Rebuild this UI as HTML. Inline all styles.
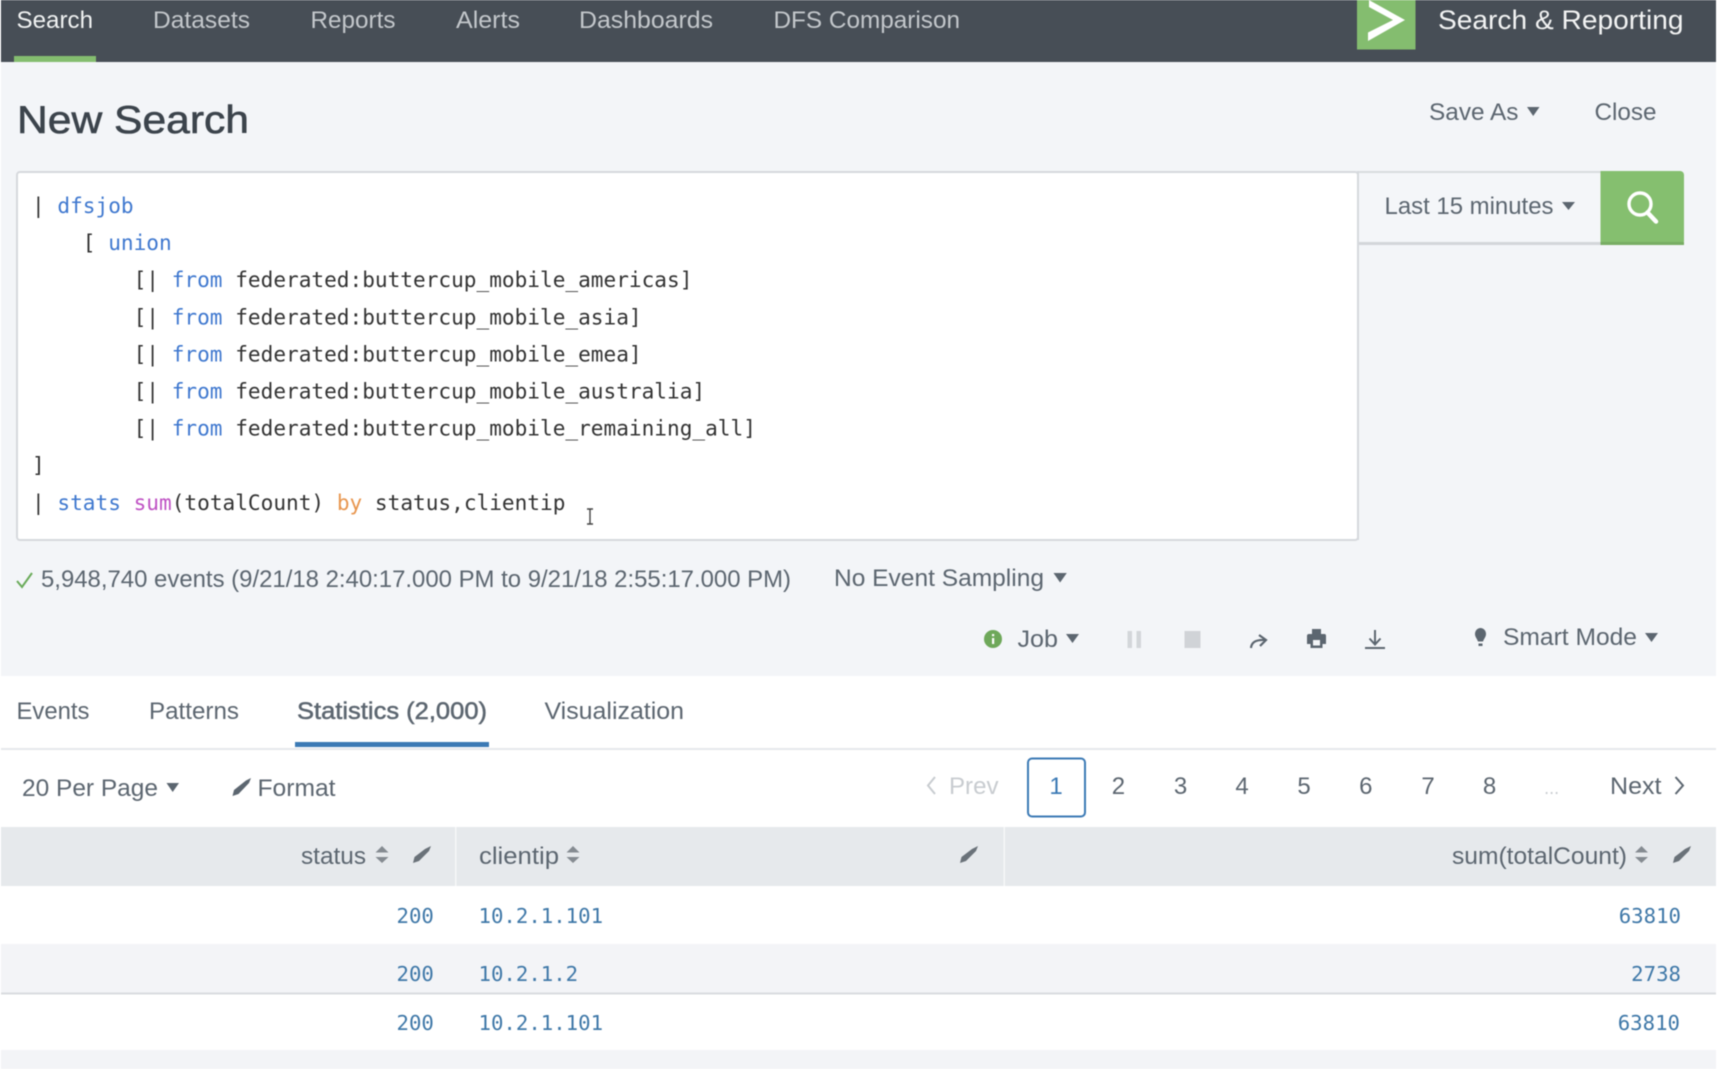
<!DOCTYPE html>
<html><head><meta charset="utf-8"><title>New Search</title>
<style>
html,body{margin:0;padding:0;background:#fff;width:1718px;height:1069px;overflow:hidden}
svg{display:block;position:absolute;left:0;top:0;filter:blur(.45px)}
text{font-family:"Liberation Sans",sans-serif;font-size:24px;fill:#5c6670}
.m text,text.m{font-family:"DejaVu Sans Mono","Liberation Mono",monospace;font-size:21.1px;fill:#333;white-space:pre}
.b{fill:#3f78cf}.p{fill:#bf52c4}.o{fill:#e8964f}
.v text{font-family:"DejaVu Sans Mono","Liberation Mono",monospace;font-size:20.7px;fill:#3f78a8}
</style></head><body>
<svg width="1718" height="1069" viewBox="0 0 1718 1069" xmlns="http://www.w3.org/2000/svg">
<rect x="1" y="0" width="1715" height="1069" fill="#f3f5f8"/>
<!-- nav -->
<rect x="1" y="0" width="1715" height="62" fill="#474e56"/>
<rect x="14" y="56" width="82" height="6" fill="#84bd6f"/>
<g>
<text x="16.5" y="28" textLength="76.5" lengthAdjust="spacingAndGlyphs" style="fill:#f0f2f2">Search</text>
<text x="153" y="28" textLength="97" lengthAdjust="spacingAndGlyphs" style="fill:#c3c7cb">Datasets</text>
<text x="310.5" y="28" textLength="85" lengthAdjust="spacingAndGlyphs" style="fill:#c3c7cb">Reports</text>
<text x="456" y="28" textLength="64" lengthAdjust="spacingAndGlyphs" style="fill:#c3c7cb">Alerts</text>
<text x="579" y="28" textLength="134" lengthAdjust="spacingAndGlyphs" style="fill:#c3c7cb">Dashboards</text>
<text x="773.5" y="28" textLength="186.5" lengthAdjust="spacingAndGlyphs" style="fill:#c3c7cb">DFS Comparison</text>
</g>
<rect x="1357" y="0" width="58.5" height="49.5" fill="#84bd6f"/>
<path d="M1369 0L1405 20L1368 41V32.5L1393 20L1369 7Z" fill="#fff"/>
<text x="1438" y="29" textLength="245.5" lengthAdjust="spacingAndGlyphs" style="font-size:26.5px;fill:#f2f3f3">Search &amp; Reporting</text>
<!-- title -->
<text x="17" y="133" textLength="232" lengthAdjust="spacingAndGlyphs" style="font-size:39px;fill:#3c444c;stroke:#3c444c;stroke-width:.6px">New Search</text>
<text x="1429" y="120" textLength="89.5" lengthAdjust="spacingAndGlyphs">Save As</text>
<path d="M1527 107H1539.5L1533.2 116Z" fill="#5c6670"/>
<text x="1594.5" y="120" textLength="62" lengthAdjust="spacingAndGlyphs">Close</text>
<!-- editor -->
<rect x="17" y="172" width="1341" height="368" rx="3" fill="#fff" stroke="#d6d9dd" stroke-width="2"/>
<g class="m">
<text x="32" y="213">| <tspan class="b">dfsjob</tspan></text>
<text x="32" y="250.1">    [ <tspan class="b">union</tspan></text>
<text x="32" y="287.2">        [| <tspan class="b">from</tspan> federated:buttercup_mobile_americas]</text>
<text x="32" y="324.3">        [| <tspan class="b">from</tspan> federated:buttercup_mobile_asia]</text>
<text x="32" y="361.4">        [| <tspan class="b">from</tspan> federated:buttercup_mobile_emea]</text>
<text x="32" y="398.5">        [| <tspan class="b">from</tspan> federated:buttercup_mobile_australia]</text>
<text x="32" y="435.6">        [| <tspan class="b">from</tspan> federated:buttercup_mobile_remaining_all]</text>
<text x="32" y="472.7">]</text>
<text x="32" y="509.8">| <tspan class="b">stats</tspan> <tspan class="p">sum</tspan>(totalCount) <tspan class="o">by</tspan> status,clientip</text>
</g>
<path d="M587 509H593M590 509V524M587 524H593" stroke="#444" stroke-width="1.4" fill="none"/>
<!-- time range -->
<rect x="1358" y="172" width="243" height="73" fill="#f4f6f9"/>
<rect x="1358" y="171" width="243" height="2" fill="#d9dcdf"/>
<rect x="1358" y="242" width="243" height="3" fill="#d3d6da"/>
<rect x="1357" y="171" width="2" height="369" fill="#d6d9dd"/>
<text x="1384.5" y="214" textLength="169" lengthAdjust="spacingAndGlyphs">Last 15 minutes</text>
<path d="M1562 202H1575L1568.5 210Z" fill="#5c6670"/>
<path d="M1600.5 171H1680a4 4 0 0 1 4 4V241a4 4 0 0 1-4 4H1600.5Z" fill="#85bf6f"/>
<rect x="1600.5" y="242" width="83.5" height="3" fill="#78ad64"/>
<circle cx="1640" cy="204" r="11" fill="none" stroke="#fff" stroke-width="3.4"/>
<path d="M1647.5 212.5L1656 221.5" stroke="#fff" stroke-width="4.5" stroke-linecap="round"/>
<!-- status -->
<path d="M17 581L22 587L32 573" fill="none" stroke="#6aab5a" stroke-width="2"/>
<text x="41" y="587" textLength="750" lengthAdjust="spacingAndGlyphs">5,948,740 events (9/21/18 2:40:17.000 PM to 9/21/18 2:55:17.000 PM)</text>
<text x="834" y="586" textLength="210" lengthAdjust="spacingAndGlyphs">No Event Sampling</text>
<path d="M1053.5 573H1066.8L1060.1 582.5Z" fill="#5c6670"/>
<!-- job row -->
<circle cx="993" cy="639" r="9" fill="#6ea85a"/>
<rect x="992" y="638" width="2.2" height="6" fill="#fff"/><rect x="992" y="634" width="2.2" height="2.2" fill="#fff"/>
<text x="1017.5" y="647" textLength="40.5" lengthAdjust="spacingAndGlyphs">Job</text>
<path d="M1066 634H1079L1072.5 643Z" fill="#5c6670"/>
<rect x="1127.5" y="631" width="4.5" height="17" fill="#d3d6da"/><rect x="1136.5" y="631" width="4.5" height="17" fill="#d3d6da"/>
<rect x="1184.5" y="631" width="16" height="17" fill="#d0d3d7"/>
<path d="M1251 648C1251.5 642 1256 639.5 1265 640M1259 635L1266 640L1260 646" fill="none" stroke="#5c6670" stroke-width="2.2"/>
<path d="M1312 629H1321V634H1324.5Q1326 634 1326 636V644H1322.5V648H1310.5V644H1307V636Q1307 634 1309 634H1312ZM1313 640V645.5H1320V640Z" fill="#5c6670" fill-rule="evenodd"/>
<path d="M1375 630V644M1369.5 638.5L1375 644.5L1380.5 638.5M1365 648H1385" fill="none" stroke="#5c6670" stroke-width="2"/>
<path d="M1480.5 628a5.5 6 0 0 1 5.5 6c0 3-2 4.500-3 7.500h-5c-1-3-3-4.500-3-7.500a5.500 6 0 0 1 5.500-6ZM1478.500 643.500h4v2.500h-4Z" fill="#5c6670"/>
<text x="1503" y="645" textLength="134" lengthAdjust="spacingAndGlyphs">Smart Mode</text>
<path d="M1645 633H1658L1651.5 642Z" fill="#5c6670"/>
<!-- panel -->
<rect x="1" y="676" width="1715" height="393" fill="#fff"/>
<text x="16.5" y="719" textLength="73" lengthAdjust="spacingAndGlyphs">Events</text>
<text x="149" y="719" textLength="90" lengthAdjust="spacingAndGlyphs">Patterns</text>
<text x="297" y="719" textLength="190" lengthAdjust="spacingAndGlyphs" style="stroke:#5c6670;stroke-width:.5px">Statistics (2,000)</text>
<text x="544.5" y="719" textLength="139.5" lengthAdjust="spacingAndGlyphs">Visualization</text>
<rect x="295" y="742" width="194" height="5" fill="#3c7ab5"/>
<rect x="1" y="748" width="1715" height="2" fill="#e6e8eb"/>
<text x="22" y="796" textLength="136" lengthAdjust="spacingAndGlyphs">20 Per Page</text>
<path d="M166.5 783H179L172.7 792Z" fill="#5c6670"/>
<path d="M232.5 796L234 790L246 780.500L251 778L249 783L238.500 794Z" fill="#5c6670"/>
<text x="257.5" y="796" textLength="78" lengthAdjust="spacingAndGlyphs">Format</text>
<path d="M935 777L928 785.5L935 794" fill="none" stroke="#c8ccd0" stroke-width="2"/>
<text x="949" y="794" textLength="49.5" lengthAdjust="spacingAndGlyphs" style="fill:#c8ccd0">Prev</text>
<rect x="1028" y="758.5" width="57" height="58" rx="4" fill="#fff" stroke="#3c7ab5" stroke-width="2"/>
<g text-anchor="middle">
<text x="1056" y="794" style="fill:#3c7ab5">1</text>
<text x="1118.4" y="794">2</text>
<text x="1180.5" y="794">3</text>
<text x="1242" y="794">4</text>
<text x="1304" y="794">5</text>
<text x="1365.8" y="794">6</text>
<text x="1428" y="794">7</text>
<text x="1489.5" y="794">8</text>
<text x="1551.6" y="794" style="fill:#c8ccd0;font-size:18px">...</text>
</g>
<text x="1610" y="794" textLength="51.5" lengthAdjust="spacingAndGlyphs">Next</text>
<path d="M1675.5 777L1683 785.5L1675.5 794" fill="none" stroke="#5c6670" stroke-width="2"/>
<!-- table header -->
<rect x="1" y="827" width="1715" height="59" fill="#e6e9ec"/>
<rect x="455" y="827" width="1.5" height="59" fill="#f6f7f8"/>
<rect x="1003.5" y="827" width="1.5" height="59" fill="#f6f7f8"/>
<text x="301" y="864" textLength="65" lengthAdjust="spacingAndGlyphs">status</text>
<path d="M382 846L388.5 852.5H375.5ZM382 863L388.5 857H375.5Z" fill="#858b91"/>
<path d="M413 863L414.5 857L425 849L431 846L429 851L419 861Z" fill="#6a7279"/>
<text x="479" y="864" textLength="80" lengthAdjust="spacingAndGlyphs">clientip</text>
<path d="M573 846L579.5 852.5H566.5ZM573 863L579.5 857H566.5Z" fill="#858b91"/>
<path d="M960 863L961.5 857L972 849L978 846L976 851L966 861Z" fill="#6a7279"/>
<text x="1452" y="864" textLength="175" lengthAdjust="spacingAndGlyphs">sum(totalCount)</text>
<path d="M1641.5 846L1648 852.5H1635ZM1641.5 863L1648 857H1635Z" fill="#858b91"/>
<path d="M1673 863L1674.5 857L1685 849L1691 846L1689 851L1679 861Z" fill="#6a7279"/>
<!-- rows -->
<rect x="1" y="944" width="1715" height="49" fill="#f3f4f7"/>
<rect x="1" y="992.5" width="1715" height="2" fill="#dadcdf"/>
<rect x="1" y="1050" width="1715" height="19" fill="#f3f4f7"/>
<g class="v">
<text x="396.5" y="923">200</text><text x="478.5" y="923">10.2.1.101</text><text x="1681" y="923" text-anchor="end">63810</text>
<text x="396.5" y="981">200</text><text x="478.5" y="981">10.2.1.2</text><text x="1681" y="981" text-anchor="end">2738</text>
<text x="396.5" y="1030">200</text><text x="478.5" y="1030">10.2.1.101</text><text x="1680" y="1030" text-anchor="end">63810</text>
</g>
</svg>
</body></html>
